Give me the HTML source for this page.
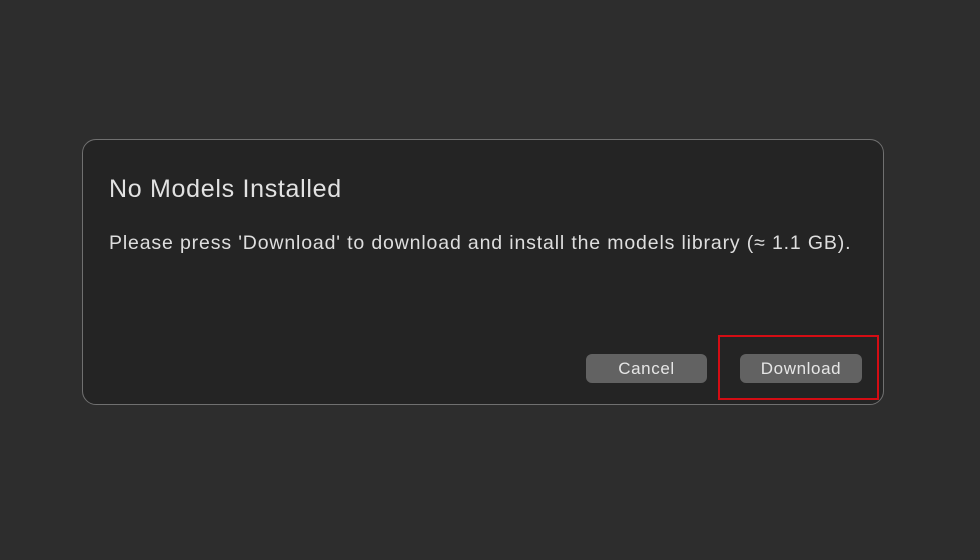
<!DOCTYPE html>
<html><head><style>
html,body{margin:0;padding:0;}
body{width:980px;height:560px;background:#2d2d2d;position:relative;overflow:hidden;font-family:"Liberation Sans",sans-serif;}
.dlg{position:absolute;left:82px;top:139px;width:800px;height:264px;background:#242424;border:1px solid #707070;border-radius:14px;}
.t{position:absolute;left:109px;top:175px;font-size:25px;letter-spacing:0.7px;color:#e2e2e2;}
.b{position:absolute;left:109px;top:232px;font-size:19.5px;letter-spacing:0.85px;color:#dedede;white-space:nowrap;}
.btn{position:absolute;top:354px;height:29px;width:121px;background:#626262;border-radius:6px;color:#e6e6e6;font-size:17px;letter-spacing:0.6px;text-align:center;line-height:29px;}
.red{position:absolute;left:718px;top:335px;width:157px;height:61px;border:2px solid #d40d14;}
</style></head><body>
<div class="dlg"></div>
<div class="t">No Models Installed</div>
<div class="b">Please press 'Download' to download and install the models library (≈ 1.1 GB).</div>
<div class="btn" style="left:586px">Cancel</div>
<div class="btn" style="left:740px;width:122px">Download</div>
<div class="red"></div>
</body></html>
